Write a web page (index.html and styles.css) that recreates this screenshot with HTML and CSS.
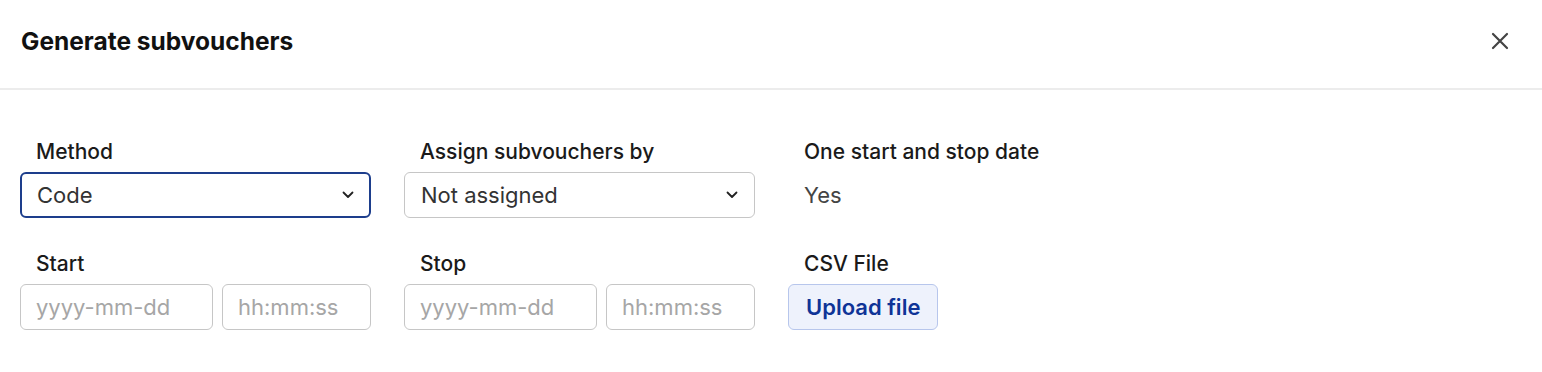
FILE: index.html
```html
<!DOCTYPE html>
<html lang="en">
<head>
    <meta charset="UTF-8">
    <meta name="viewport" content="width=device-width, initial-scale=1.0">
    <title>Generate subvouchers</title>
    <link rel="stylesheet" href="styles.css">
</head>
<body>
    <div class="modal">
        <div class="modal-header">
            <h2>Generate subvouchers</h2>
            <button class="close-button" aria-label="Close">
                <svg width="18" height="18" viewBox="0 0 18 18"><path d="M2 2 L16 16 M16 2 L2 16" stroke="#444" stroke-width="2.2" stroke-linecap="round"/></svg>
            </button>
        </div>
        <div class="modal-body">
            <div class="field">
                <label>Method</label>
                <div class="select focused">
                    <span>Code</span>
                    <svg class="chevron" width="12" height="8" viewBox="0 0 12 8"><path d="M1.5 1.5 L6 6 L10.5 1.5" fill="none" stroke="#222" stroke-width="1.8" stroke-linecap="round" stroke-linejoin="round"/></svg>
                </div>
            </div>
            <div class="field">
                <label>Assign subvouchers by</label>
                <div class="select">
                    <span>Not assigned</span>
                    <svg class="chevron" width="12" height="8" viewBox="0 0 12 8"><path d="M1.5 1.5 L6 6 L10.5 1.5" fill="none" stroke="#222" stroke-width="1.8" stroke-linecap="round" stroke-linejoin="round"/></svg>
                </div>
            </div>
            <div class="field">
                <label>One start and stop date</label>
                <div class="value">Yes</div>
            </div>
            <div class="field">
                <label>Start</label>
                <div class="datetime">
                    <input class="date" type="text" placeholder="yyyy-mm-dd">
                    <input class="time" type="text" placeholder="hh:mm:ss">
                </div>
            </div>
            <div class="field">
                <label>Stop</label>
                <div class="datetime">
                    <input class="date" type="text" placeholder="yyyy-mm-dd">
                    <input class="time" type="text" placeholder="hh:mm:ss">
                </div>
            </div>
            <div class="field">
                <label>CSV File</label>
                <div class="upload-row">
                    <button class="upload-button">Upload file</button>
                </div>
            </div>
        </div>
    </div>
</body>
</html>
```

FILE: styles.css
```css
body {
    font-family: 'Inter', 'Liberation Sans', sans-serif;
    margin: 0;
    padding: 0;
    background: #fff;
    color: #1a1a1a;
}
.modal {
    width: 1542px;
}
.modal-header {
    box-sizing: border-box;
    display: flex;
    align-items: center;
    justify-content: space-between;
    height: 90px;
    padding: 0 33px 6px 21px;
    border-bottom: 2px solid #ececec;
}
.modal-header h2 {
    margin: 0;
    font-size: 24.5px;
    font-weight: 700;
    color: #111;
}
.close-button {
    border: none;
    background: none;
    padding: 0;
    display: flex;
    cursor: pointer;
}
.modal-body {
    display: grid;
    grid-template-columns: repeat(3, 351px);
    column-gap: 33px;
    row-gap: 33px;
    padding: 49px 20px 0;
}
.field label {
    display: block;
    font-size: 21px;
    font-weight: 500;
    color: #1a1a1a;
    padding-left: 16px;
    margin-bottom: 7px;
    line-height: 26px;
}
.select {
    box-sizing: border-box;
    height: 46px;
    display: flex;
    align-items: center;
    justify-content: space-between;
    padding: 0 16px;
    border: 1.5px solid #c6c6c6;
    border-radius: 6px;
    font-size: 22px;
    color: #333;
}
.select.focused {
    border: 2px solid #1d3e8c;
    padding: 0 15px;
}
.value {
    height: 46px;
    display: flex;
    align-items: center;
    padding-left: 16px;
    font-size: 22px;
    color: #444;
}
.datetime {
    display: flex;
    gap: 9px;
}
.datetime input {
    box-sizing: border-box;
    height: 46px;
    padding: 0 15px;
    border: 1.5px solid #c6c6c6;
    border-radius: 6px;
    font-family: inherit;
    font-size: 22px;
    color: #333;
    outline: none;
}
.datetime input::placeholder {
    color: #a6a6a6;
}
.datetime .date {
    width: 193px;
}
.datetime .time {
    width: 149px;
}
.upload-row {
    display: flex;
}
.upload-button {
    box-sizing: border-box;
    height: 46px;
    padding: 0 17px;
    background-color: #eef2fc;
    border: 1.5px solid #b7c6ec;
    border-radius: 6px;
    font-family: inherit;
    font-size: 22px;
    font-weight: 600;
    color: #0f3497;
    cursor: pointer;
}
```
